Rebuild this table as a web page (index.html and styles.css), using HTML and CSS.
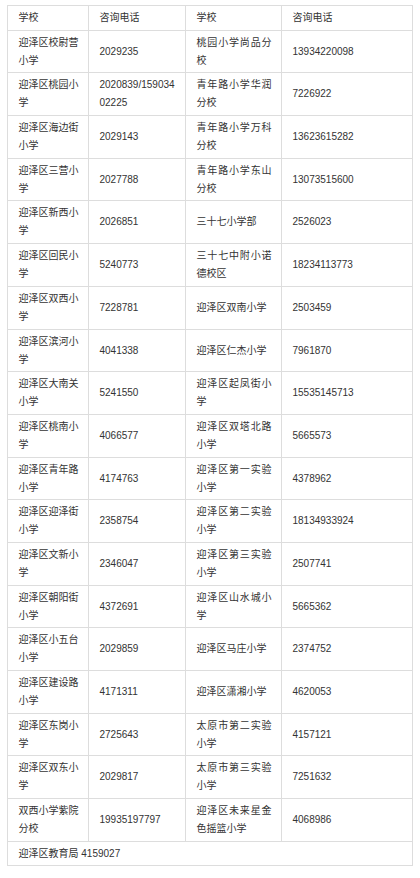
FILE: index.html
```html
<!DOCTYPE html>
<html lang="zh-CN">
<head>
<meta charset="utf-8">
<link rel="stylesheet" href="styles.css">
</head>
<body>
<div class="page">
<table class="schools">
<colgroup>
<col class="c1"><col class="c2"><col class="c3"><col class="c4">
</colgroup>
<thead>
<tr class="head"><td>学校</td><td>咨询电话</td><td>学校</td><td>咨询电话</td></tr>
</thead>
<tbody>
<tr><td>迎泽区校尉营小学</td><td>2029235</td><td>桃园小学尚品分校</td><td>13934220098</td></tr>
<tr><td>迎泽区桃园小学</td><td>2020839/15903402225</td><td>青年路小学华润分校</td><td>7226922</td></tr>
<tr><td>迎泽区海边街小学</td><td>2029143</td><td>青年路小学万科分校</td><td>13623615282</td></tr>
<tr><td>迎泽区三营小学</td><td>2027788</td><td>青年路小学东山分校</td><td>13073515600</td></tr>
<tr><td>迎泽区新西小学</td><td>2026851</td><td>三十七小学部</td><td>2526023</td></tr>
<tr><td>迎泽区回民小学</td><td>5240773</td><td>三十七中附小诺德校区</td><td>18234113773</td></tr>
<tr><td>迎泽区双西小学</td><td>7228781</td><td>迎泽区双南小学</td><td>2503459</td></tr>
<tr><td>迎泽区滨河小学</td><td>4041338</td><td>迎泽区仁杰小学</td><td>7961870</td></tr>
<tr><td>迎泽区大南关小学</td><td>5241550</td><td>迎泽区起凤街小学</td><td>15535145713</td></tr>
<tr><td>迎泽区桃南小学</td><td>4066577</td><td>迎泽区双塔北路小学</td><td>5665573</td></tr>
<tr><td>迎泽区青年路小学</td><td>4174763</td><td>迎泽区第一实验小学</td><td>4378962</td></tr>
<tr><td>迎泽区迎泽街小学</td><td>2358754</td><td>迎泽区第二实验小学</td><td>18134933924</td></tr>
<tr><td>迎泽区文新小学</td><td>2346047</td><td>迎泽区第三实验小学</td><td>2507741</td></tr>
<tr><td>迎泽区朝阳街小学</td><td>4372691</td><td>迎泽区山水城小学</td><td>5665362</td></tr>
<tr><td>迎泽区小五台小学</td><td>2029859</td><td>迎泽区马庄小学</td><td>2374752</td></tr>
<tr><td>迎泽区建设路小学</td><td>4171311</td><td>迎泽区潇湘小学</td><td>4620053</td></tr>
<tr><td>迎泽区东岗小学</td><td>2725643</td><td>太原市第二实验小学</td><td>4157121</td></tr>
<tr><td>迎泽区双东小学</td><td>2029817</td><td>太原市第三实验小学</td><td>7251632</td></tr>
<tr><td>双西小学紫院分校</td><td>19935197797</td><td>迎泽区未来星金色摇篮小学</td><td>4068986</td></tr>
<tr class="foot"><td colspan="4">迎泽区教育局 4159027</td></tr>
</tbody>
</table>
</div>
</body>
</html>
```
FILE: styles.css
```css
html, body {
  margin: 0;
  padding: 0;
  background: #fff;
}
.page {
  padding: 5px 0 0 7px;
}
.schools {
  border-collapse: collapse;
  table-layout: fixed;
  width: 405px;
  font-family: "Liberation Sans", "Noto Sans CJK SC", sans-serif;
  font-size: 10px;
  line-height: 18px;
  color: #333;
}
.c1 { width: 81px; }
.c2 { width: 97px; }
.c3 { width: 96px; }
.c4 { width: 131px; }
.schools td {
  border: 1px solid #ddd;
  padding: 3px 9.5px 2.7px 10.5px;
  vertical-align: middle;
  text-align: justify;
  word-break: break-all;
}
.schools .head td,
.schools .foot td {
  padding-top: 3px;
  padding-bottom: 2.7px;
}
```
